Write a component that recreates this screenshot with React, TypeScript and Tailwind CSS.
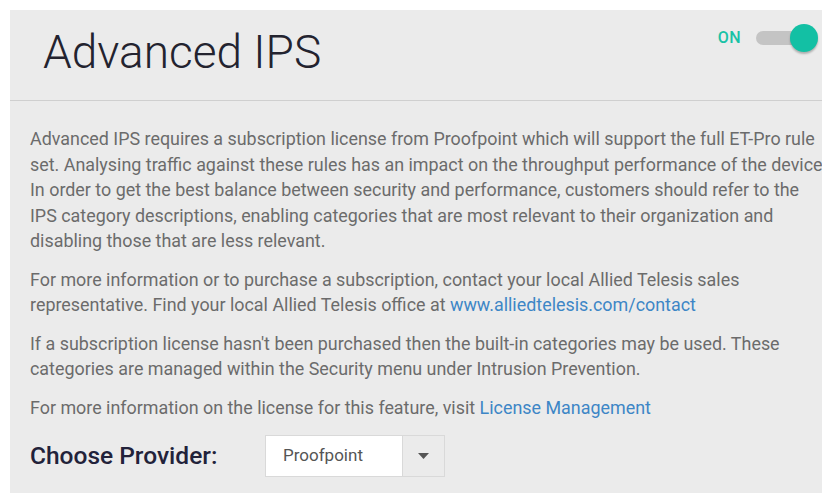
import { useState } from 'react';

const body = "font-['Roboto',sans-serif]";

function Toggle({ on, onChange }: { on: boolean; onChange: (v: boolean) => void }) {
  return (
    <button
      onClick={() => onChange(!on)}
      className="flex items-center gap-[15px]"
      aria-pressed={on}
    >
      <span className="text-[16px] font-medium text-[#19c2a6] tracking-wide">{on ? 'ON' : 'OFF'}</span>
      <span className="relative block w-[62px] h-[28px]">
        <span className="absolute left-0 right-[6px] top-[7px] h-[14px] rounded-full bg-[#c4c4c4]" />
        <span
          className={`absolute top-0 w-[28px] h-[28px] rounded-full shadow-[0_2px_2px_rgba(0,0,0,0.25)] ${
            on ? 'right-0 bg-[#13c0a4]' : 'left-0 bg-[#f5f5f5]'
          }`}
        />
      </span>
    </button>
  );
}

export default function App() {
  const [enabled, setEnabled] = useState(true);

  return (
    <div className={`w-[822px] h-[493px] overflow-hidden bg-white pl-[10px] pt-[10px] ${body}`}>
      <section className="w-[900px] h-[500px] bg-[#ebebeb]">
        {/* Header */}
        <div className="flex justify-between h-[91px] border-b border-[#cfcfcf] pl-[33px] pr-[92px]">
          <h1 className="text-[46px] font-light text-[#23232f] leading-none pt-[19px]">Advanced IPS</h1>
          <div className="pt-[14px]">
            <Toggle on={enabled} onChange={setEnabled} />
          </div>
        </div>

        <div className="pl-[20px] pt-[25px] text-[17.9px] leading-[25.5px] text-[#6b6b6b] space-y-[13px] whitespace-nowrap">
          <p>
            Advanced IPS requires a subscription license from Proofpoint which will support the full ET-Pro rule
            <br />
            set. Analysing traffic against these rules has an impact on the throughput performance of the device.
            <br />
            In order to get the best balance between security and performance, customers should refer to the
            <br />
            IPS category descriptions, enabling categories that are most relevant to their organization and
            <br />
            disabling those that are less relevant.
          </p>
          <p>
            For more information or to purchase a subscription, contact your local Allied Telesis sales
            <br />
            representative. Find your local Allied Telesis office at{' '}
            <a className="text-[#3d86c6]" href="#">www.alliedtelesis.com/contact</a>
          </p>
          <p>
            If a subscription license hasn't been purchased then the built-in categories may be used. These
            <br />
            categories are managed within the Security menu under Intrusion Prevention.
          </p>
          <p>
            For more information on the license for this feature, visit{' '}
            <a className="text-[#3d86c6]" href="#">License Management</a>
          </p>
        </div>

        {/* Provider select */}
        <div className="flex items-center pl-[20px] pt-[15px]">
          <span className="w-[235px] text-[24.5px] font-medium text-[#22223a]">Choose Provider:</span>
          <div className="flex h-[42px] border border-[#d9d9d9]">
            <div className="w-[136px] bg-white pl-[17px] flex items-center text-[17px] text-[#555]">Proofpoint</div>
            <div className="w-[42px] border-l border-[#d9d9d9] flex items-center justify-center">
              <svg width="11" height="6" viewBox="0 0 11 6">
                <path d="M0 0h11L5.5 6z" fill="#555" />
              </svg>
            </div>
          </div>
        </div>
      </section>
    </div>
  );
}
